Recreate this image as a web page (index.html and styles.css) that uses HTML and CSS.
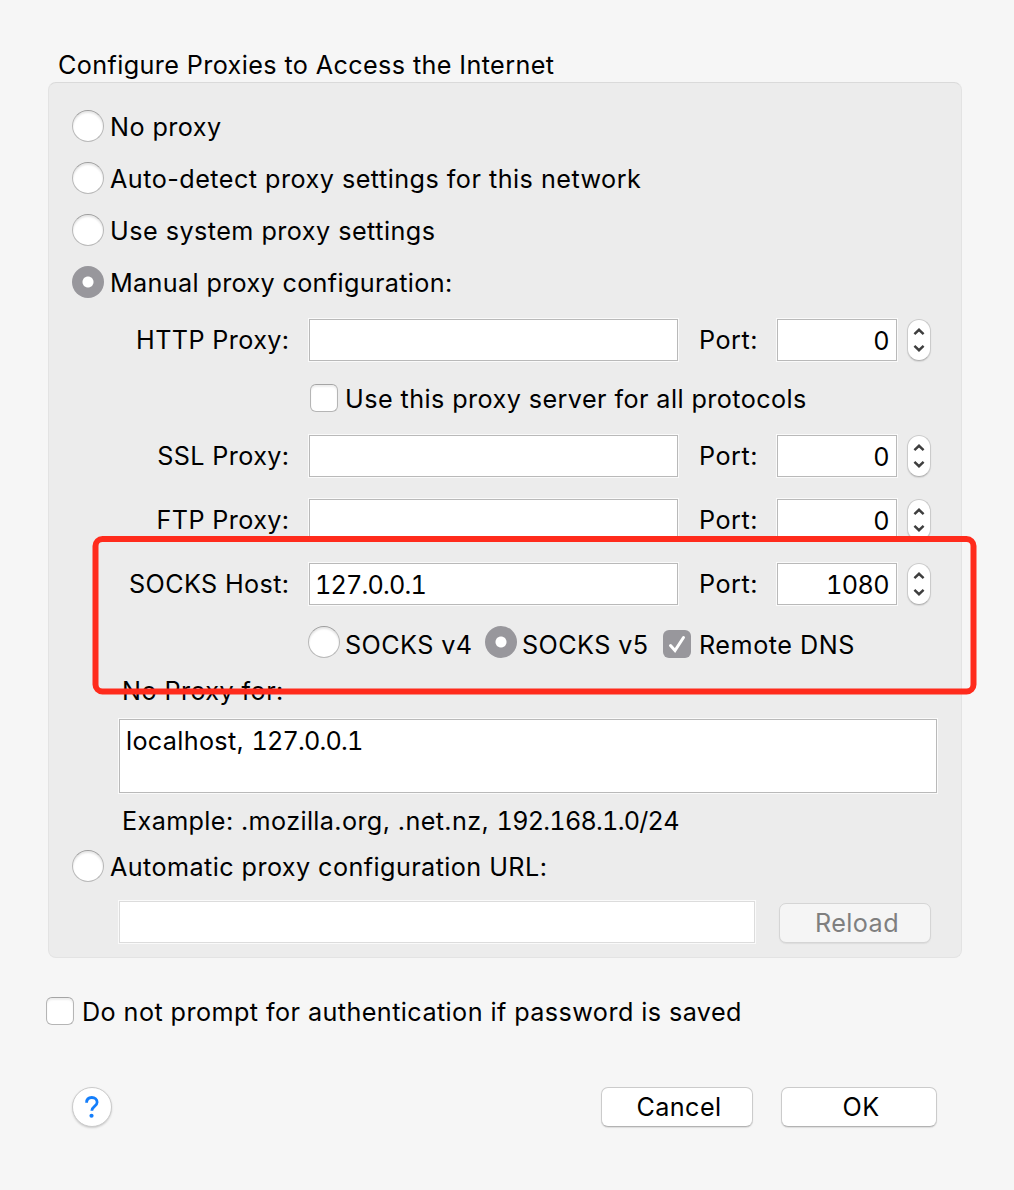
FILE: index.html
```html
<!DOCTYPE html>
<html lang="en">
<head>
<meta charset="utf-8">
<title>Connection Settings</title>
<link rel="stylesheet" href="styles.css">
</head>
<body>
<main class="dialog">
  <h1 class="title"><span class="t">Configure Proxies to Access the Internet</span></h1>
  <section class="panel">
    <div class="choice"><i class="radio"></i><span class="t">No proxy</span></div>
    <div class="choice"><i class="radio"></i><span class="t auto-detect">Auto-detect proxy settings for this network</span></div>
    <div class="choice"><i class="radio"></i><span class="t system">Use system proxy settings</span></div>
    <div class="choice"><i class="radio on"></i><span class="t manual">Manual proxy configuration:</span></div>

    <div class="server http">
      <span class="label"><span class="t">HTTP Proxy:</span></span><div class="field"></div>
      <span class="port"><span class="t">Port:</span></span><div class="field number"><span class="t">0</span></div>
      <svg class="stepper" viewBox="0 0 24 42"><path d="M7 14.500l5-4.700 5 4.700M7 27.500l5 4.700 5-4.700"/></svg>
    </div>
    <div class="shared"><i class="check"></i><span class="t">Use this proxy server for all protocols</span></div>
    <div class="server">
      <span class="label"><span class="t">SSL Proxy:</span></span><div class="field"></div>
      <span class="port"><span class="t">Port:</span></span><div class="field number"><span class="t">0</span></div>
      <svg class="stepper" viewBox="0 0 24 42"><path d="M7 14.500l5-4.700 5 4.700M7 27.500l5 4.700 5-4.700"/></svg>
    </div>
    <div class="server ftp">
      <span class="label"><span class="t">FTP Proxy:</span></span><div class="field"></div>
      <span class="port"><span class="t">Port:</span></span><div class="field number"><span class="t">0</span></div>
      <svg class="stepper" viewBox="0 0 24 42"><path d="M7 14.500l5-4.700 5 4.700M7 27.500l5 4.700 5-4.700"/></svg>
    </div>
    <div class="server socks">
      <span class="label"><span class="t">SOCKS Host:</span></span><div class="field"><span class="t digits">127.0.0.1</span></div>
      <span class="port"><span class="t">Port:</span></span><div class="field number"><span class="t">1080</span></div>
      <svg class="stepper" viewBox="0 0 24 42"><path d="M7 14.500l5-4.700 5 4.700M7 27.500l5 4.700 5-4.700"/></svg>
    </div>
    <div class="versions">
      <div class="version"><i class="radio"></i><span class="t">SOCKS v4</span></div>
      <div class="version"><i class="radio on"></i><span class="t">SOCKS v5</span></div>
      <div class="remote"><i class="check on"><svg viewBox="0 0 28 28"><path d="M7.500 15.500l4.500 5L20.500 7.500"/></svg></i><span class="t dns">Remote DNS</span></div>
    </div>
    <div class="note bypass-label"><span class="t">No Proxy for:</span></div>
    <div class="field bypass"><span class="t">localhost, <span class="digits">127.0.0.1</span></span></div>
    <div class="note example"><span class="t">Example: .mozilla.org, .net.nz, <span class="digits range">192.168.1.0/24</span></span></div>
    <div class="choice automatic"><i class="radio"></i><span class="t">Automatic proxy configuration URL:</span></div>
    <div class="url-row"><div class="field disabled"></div><button class="button reload" disabled><span class="t">Reload</span></button></div>
  </section>
  <div class="prompt"><i class="check"></i><span class="t">Do not prompt for authentication if password is saved</span></div>
  <footer class="actions">
    <button class="help" aria-label="Help"><svg viewBox="0 0 40 40"><path d="M14.300 15.500c0-3.500 2.300-5.500 5.500-5.500s5.600 2 5.600 5c0 4.500-5.600 4.300-5.600 9"/><circle cx="19.500" cy="29.200" r="2.200"/></svg></button>
    <button class="button cancel"><span class="t">Cancel</span></button>
    <button class="button ok"><span class="t">OK</span></button>
  </footer>
  <svg class="highlight" viewBox="0 0 886 160"><rect x="3.500" y="3" width="878" height="152.500" rx="7"/></svg>
</main>
</body>
</html>
```
FILE: styles.css
```css
* { box-sizing: border-box; }
body { margin: 0; background: #f6f6f6; color: #000; font: 25.2px/32px Inter, "Liberation Sans", sans-serif; letter-spacing: 0.42px; }
.dialog { position: relative; width: 1014px; height: 1190px; padding: 49px 52px 0 48px; overflow: hidden; }
.t { display: inline-block; white-space: nowrap; }
.digits { font-variant-numeric: tabular-nums; letter-spacing: -0.82px; }
.title { margin: 0; height: 33px; padding-left: 10px; font-size: inherit; font-weight: 400; letter-spacing: 0.38px; }
.panel { height: 876px; padding: 17px 0 0 23px; background: #ececec; border: 1px solid #e3e3e3; border-top-color: #dadada; border-radius: 8px; }
.choice { display: flex; align-items: center; height: 52px; gap: 6px; }
.choice .t, .shared .t, .prompt .t { padding-top: 2px; }
.auto-detect { letter-spacing: 0.47px; }
.system { letter-spacing: 0.46px; }
.manual { letter-spacing: 0.34px; }
.radio { flex: none; width: 32px; height: 32px; border-radius: 50%; background: #fff; border: 1px solid #b9b9b9; border-top-color: #9d9d9d; box-shadow: inset 0 2px 2px #e6e6e6; }
.radio.on { border: 0; background: radial-gradient(circle at 50% 50%, #fff 5px, #98979c 6px); box-shadow: none; }
.server { display: flex; align-items: center; height: 42px; }
.http { margin-top: 11px; }
.label { width: 217px; text-align: right; margin-right: 20px; letter-spacing: 0.38px; }
.label .t { margin-right: -0.5px; }
.field { width: 369px; height: 42px; background: #fff; border: 1px solid #b9b9b9; box-shadow: 0 0 0 1px #fafafa; padding: 5px 6px 0; }
.server .field { padding-left: 5px; }
.port { width: 99px; padding-left: 21px; letter-spacing: 0.5px; }
.server .number { width: 120px; padding-right: 7px; text-align: right; letter-spacing: -0.6px; font-variant-numeric: tabular-nums; }
.stepper { width: 24px; height: 42px; margin-left: 10px; border-radius: 12px; background: #fff; border: 1px solid #cbcbcb; border-bottom-color: #b3b3b3; box-shadow: 0 1px 1px #d5d5d5; fill: none; stroke: #3e3e3e; stroke-width: 2.700; }
.shared { display: flex; align-items: center; gap: 7px; height: 28px; margin: 23px 0 23px 238px; }
.check { flex: none; width: 28px; height: 28px; border: 1px solid #b5b5b5; border-top-color: #a5a5a5; border-radius: 6px; background: #fff; box-shadow: inset 0 2px 2px #eee; }
.check.on { border: 0; background: #98979c; box-shadow: none; }
.check svg { display: block; fill: none; stroke: #fff; stroke-width: 3; stroke-linecap: round; }
.ftp, .socks { margin-top: 22px; }
.versions { display: flex; margin: 21px 0 0 236px; height: 32px; }
.version { display: flex; gap: 5px; width: 177px; }
.version .t { padding-top: 3px; }
.remote { display: flex; align-items: center; gap: 8px; margin-left: 1px; padding-top: 4px; height: 32px; }
.dns { padding-top: 2px; letter-spacing: 0.52px; }
.note { height: 32px; padding-left: 50px; }
.bypass-label { margin-top: 17px; }
.bypass { width: 818px; height: 74px; margin: 12px 0 0 47px; letter-spacing: 0.32px; }
.example { margin-top: 12px; letter-spacing: 0.37px; }
.range { letter-spacing: -0.75px; }
.automatic { height: 32px; margin-top: 13px; }
.url-row { display: flex; margin: 19px 0 0 47px; align-items: flex-end; }
.url-row .field { width: 636px; }
.field.disabled { border-color: #dcdcdc; }
.button { height: 40px; padding: 0 0 0 4px; font: inherit; letter-spacing: inherit; color: #000; background: #fff; border: 1px solid #cbcbcb; border-bottom-color: #b3b3b3; border-radius: 7px; box-shadow: 0 1px 1px #ddd; }
.reload { width: 152px; margin-left: 24px; color: #7f7f7f; background: #f5f5f5; border-color: #d5d5d5; }
.prompt { display: flex; align-items: center; height: 28px; gap: 8px; margin: 39px 0 0 -2px; }
.actions { display: flex; margin: 62px 0 0 24px; }
.help { width: 40px; height: 40px; padding: 0; border: 1px solid #cbcbcb; border-radius: 50%; background: #fff; box-shadow: 0 1px 2px #ccc; }
.help svg { display: block; fill: none; stroke: #147efb; stroke-width: 2.900; }
.help circle { fill: #147efb; stroke: none; }
.cancel { width: 152px; margin-left: 489px; }
.ok { width: 156px; margin-left: 28px; }
/* Callout frame laid over the SOCKS settings */
.highlight { position: absolute; left: 92px; top: 536px; width: 886px; height: 160px; fill: none; stroke: #ff2b1c; stroke-width: 6; }
```
